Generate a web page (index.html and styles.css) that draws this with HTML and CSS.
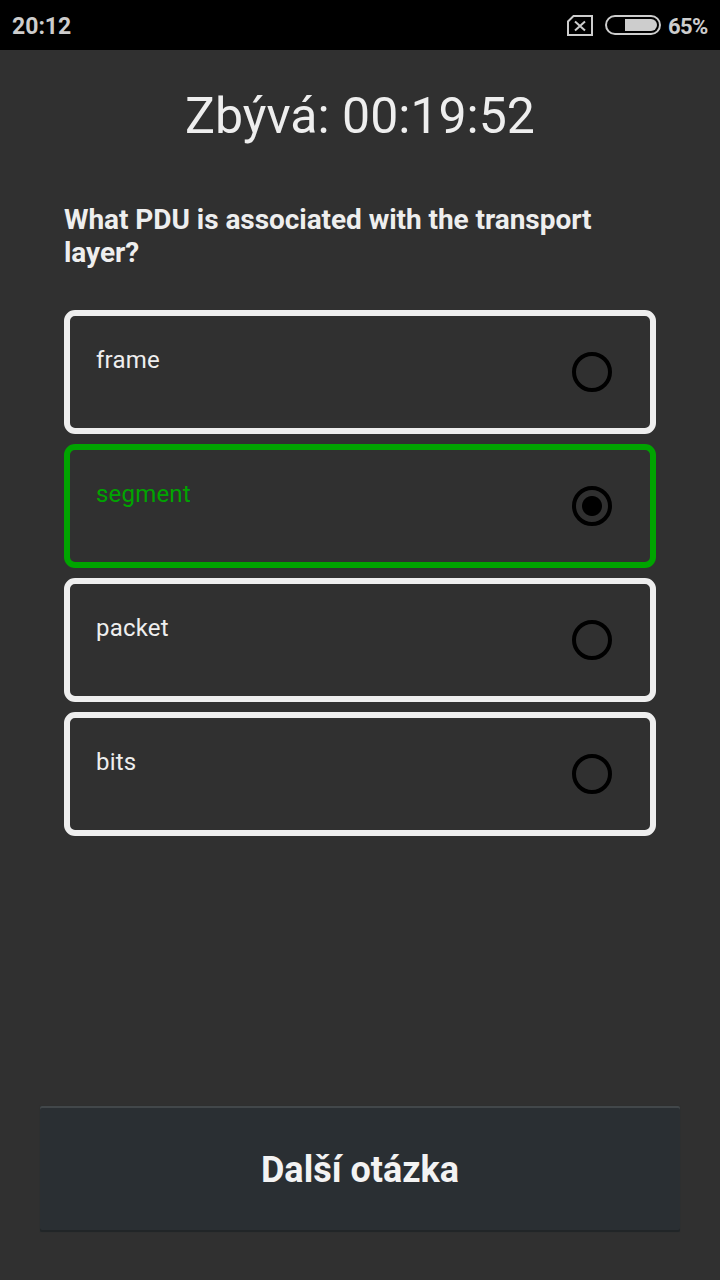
FILE: index.html
```html
<!DOCTYPE html>
<html lang="cs">
<head>
<meta charset="utf-8">
<title>Test</title>
<link rel="stylesheet" href="styles.css">
</head>
<body>
<header class="status">
  <span class="clock">20:12</span>
  <svg class="sim" width="26" height="22" viewBox="0 0 26 22" fill="none" stroke="#cdcdcd" stroke-width="2">
    <path d="M6.500 1H25V20H1V6.500Z"/>
    <path d="M8 6.500L18 15.500M18 6.500L8 15.500"/>
  </svg>
  <svg class="battery" width="56" height="20" viewBox="0 0 56 20">
    <rect x="1" y="1" width="54" height="18" rx="9" fill="none" stroke="#cdcdcd" stroke-width="2"/>
    <path d="M20 4H46A6 6 0 0 1 46 16H20Z" fill="#cdcdcd"/>
  </svg>
  <span class="percent">65%</span>
</header>
<main class="quiz">
  <h1 class="timer">Zbývá: 00:19:52</h1>
  <h2 class="question">What PDU is associated with the transport layer?</h2>
  <div class="options">
    <div class="option"><span class="label">frame</span><span class="radio"></span></div>
    <div class="option selected"><span class="label">segment</span><span class="radio"></span></div>
    <div class="option"><span class="label">packet</span><span class="radio"></span></div>
    <div class="option"><span class="label">bits</span><span class="radio"></span></div>
  </div>
  <button class="next">Další otázka</button>
</main>
</body>
</html>
```
FILE: styles.css
```css
* { box-sizing: border-box; }
body {
  margin: 0;
  height: 1280px;
  display: flex;
  flex-direction: column;
  background: #303030;
  color: #eee;
  font-family: Roboto, "Noto Sans", sans-serif;
}
.status {
  height: 50px;
  padding: 2px 12px 0;
  display: flex;
  align-items: center;
  background: #000;
  color: #cdcdcd;
  font-size: 23px;
  font-weight: 700;
}
.clock { flex: 1; }
.sim { margin: -1px 12px 0 0; }
.battery { margin: -2px 7px 0 0; }
.percent { width: 40px; font-size: 22px; letter-spacing: -0.6px; white-space: nowrap; }
.quiz {
  flex: 1;
  display: flex;
  flex-direction: column;
  padding: 37px 40px 48px;
}
.timer {
  margin: 0;
  font-size: 50px;
  line-height: 59px;
  font-weight: 400;
  text-align: center;
  white-space: nowrap;
}
.question {
  margin: 57px 24px 0;
  font-size: 28px;
  line-height: 33px;
  font-weight: 700;
  letter-spacing: -0.05px;
}
.options {
  margin: 41px 24px 0;
  display: grid;
  gap: 10px;
}
.option {
  height: 124px;
  padding: 0 38px 0 26px;
  display: flex;
  justify-content: space-between;
  align-items: center;
  border: 6px solid #eee;
  border-radius: 11px;
}
.label { margin-bottom: 25px; font-size: 24px; line-height: 28px; letter-spacing: 0.2px; }
.selected { border-color: #00a400; color: #00a400; }
.radio {
  width: 40px;
  height: 40px;
  border: 4px solid #000;
  border-radius: 50%;
}
.selected .radio { background: radial-gradient(circle, #000 9.5px, transparent 10.5px); }
.next {
  margin-top: auto;
  height: 126px;
  padding: 2px 0 0;
  border: 0;
  border-radius: 2px;
  background: #2a2f33;
  box-shadow: inset 0 2px #42474a, inset 0 -2px #212527, 0 0 1px #252829;
  color: #f3f3f3;
  font: 700 36px Roboto, "Noto Sans", sans-serif;
}
```
